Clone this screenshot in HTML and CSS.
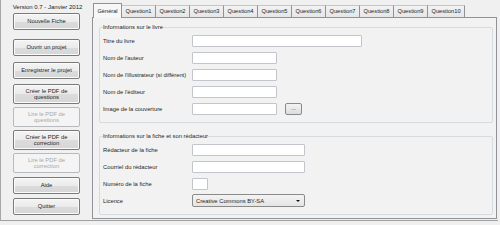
FILE: index.html
```html
<!DOCTYPE html>
<html lang="fr">
<head>
<meta charset="utf-8">
<title>Fiche</title>
<link rel="stylesheet" href="styles.css">
</head>
<body>
<div class="app">
  <div class="sidebar">
    <div class="version">Version 0.7 - Janvier 2012</div>
    <button class="btn b1">Nouvelle Fiche</button>
    <button class="btn b2">Ouvrir un projet</button>
    <button class="btn b3">Enregistrer le projet</button>
    <button class="btn tall b4">Créer le PDF de<br>questions</button>
    <button class="btn tall off b5" disabled>Lire le PDF de<br>questions</button>
    <button class="btn tall b6">Créer le PDF de<br>correction</button>
    <button class="btn tall off b7" disabled>Lire le PDF de<br>correction</button>
    <button class="btn b8">Aide</button>
    <button class="btn b9">Quitter</button>
  </div>
  <div class="tabs">
    <div class="strip">
      <div class="tab sel">Général</div>
      <div class="tab">Question1</div>
      <div class="tab">Question2</div>
      <div class="tab">Question3</div>
      <div class="tab">Question4</div>
      <div class="tab">Question5</div>
      <div class="tab">Question6</div>
      <div class="tab">Question7</div>
      <div class="tab">Question8</div>
      <div class="tab">Question9</div>
      <div class="tab wide">Question10</div>
    </div>
    <div class="panel">
      <fieldset class="group g1">
        <legend>Informations sur le livre</legend>
        <div class="row"><span class="lbl">Titre du livre</span><span class="inp long"></span></div>
        <div class="row"><span class="lbl">Nom de l'auteur</span><span class="inp mid"></span></div>
        <div class="row"><span class="lbl">Nom de l'illustrateur (si différent)</span><span class="inp mid"></span></div>
        <div class="row"><span class="lbl">Nom de l'éditeur</span><span class="inp mid"></span></div>
        <div class="row"><span class="lbl">Image de la couverture</span><span class="inp mid"></span><span class="dots">...</span></div>
      </fieldset>
      <fieldset class="group g2">
        <legend>Informations sur la fiche et son rédacteur</legend>
        <div class="row"><span class="lbl">Rédacteur de la fiche</span><span class="inp wide2"></span></div>
        <div class="row"><span class="lbl">Courriel du rédacteur</span><span class="inp wide2"></span></div>
        <div class="row"><span class="lbl">Numéro de la fiche</span><span class="inp tiny"></span></div>
        <div class="row"><span class="lbl">Licence</span><span class="select">Creative Commons BY-SA<span class="arrow"></span></span></div>
      </fieldset>
    </div>
  </div>
</div>
</body>
</html>
```

FILE: styles.css
```css
* { box-sizing: border-box; }
html, body { margin: 0; padding: 0; }
body {
  width: 500px;
  height: 225px;
  background: #f0f0f0;
  font-family: "Liberation Sans", Arial, sans-serif;
  font-size: 5.8px;
  color: #1e1e1e;
  overflow: hidden;
}
.app {
  display: flex;
  height: 221px;
  width: 498px;
  border-left: 1px solid #a8a8a8;
  border-bottom: 1px solid #a0a0a0;
}
.sidebar {
  width: 91px;
  display: flex;
  flex-direction: column;
  align-items: center;
  padding-top: 4px;
}
.version {
  font-size: 6px;
  line-height: 7px;
  margin-left: 2px;
  color: #222;
}
.btn {
  width: 67px;
  height: 17px;
  margin: 0;
  padding: 0;
  font-family: inherit;
  font-size: 5.8px;
  line-height: 6.5px;
  color: #1e1e1e;
  border: 1px solid #7a7a7a;
  border-radius: 2px;
  background: linear-gradient(#f4f4f4, #ebebeb 50%, #dcdcdc 51%, #d6d6d6);
  box-shadow: inset 0 0 0 1px #fbfbfb;
}
.btn.tall { height: 20px; }
.btn.off {
  color: #a8a8a8;
  border-color: #b8bbbe;
  background: #f4f4f4;
  box-shadow: none;
}
.b1 { margin-top: 2px; }
.b2 { margin-top: 9px; }
.b3 { margin-top: 6px; }
.b4 { margin-top: 5px; }
.b5 { margin-top: 3px; }
.b6 { margin-top: 3px; }
.b7 { margin-top: 3px; }
.b8 { margin-top: 4px; }
.b9 { margin-top: 4px; }

.tabs {
  flex: 1;
  display: flex;
  flex-direction: column;
  padding-right: 1px;
  padding-bottom: 1px;
}
.strip {
  display: flex;
  align-items: flex-end;
  height: 17px;
  padding-left: 1px;
}
.tab {
  width: 34px;
  height: 12px;
  line-height: 11px;
  text-align: center;
  font-size: 5.7px;
  border-top: 1px solid #c4c6cb;
  border-right: 1px solid #8f9297;
  background: linear-gradient(#f2f2f2, #e6e6e6);
  color: #1e1e1e;
}
.tab.wide { width: 37px; }
.tab.sel {
  width: 29px;
  height: 15px;
  line-height: 14px;
  background: #f7f7f7;
  border-left: 1px solid #8f9297;
  border-top: 1px solid #8f9297;
  margin-bottom: -1px;
  position: relative;
  z-index: 1;
}
.panel {
  flex: 1;
  border: 1px solid #8f9297;
  background: #f2f2f2;
  padding: 6px 3px 3px 6px;
  display: flex;
  flex-direction: column;
}
.group {
  margin: 0;
  border: 1px solid #d6dbe0;
  border-radius: 2px;
  padding: 1px 0 0 3px;
  min-width: 0;
}
.group legend {
  padding: 0;
  margin-left: 0;
  line-height: 6px;
  font-size: 5.8px;
  color: #1e1e1e;
}
.g1 { height: 99px; padding-top: 2px; }
.g2 { height: 82px; margin-top: 10px; padding-top: 2px; }
.row {
  display: flex;
  align-items: center;
  height: 17px;
}
.lbl {
  width: 89px;
  flex: none;
  white-space: nowrap;
}
.inp {
  height: 12px;
  background: #fff;
  border: 1px solid #c2c5cb;
  border-radius: 1px;
}
.long { width: 170px; }
.mid { width: 85px; }
.wide2 { width: 113px; }
.tiny { width: 16px; }
.dots {
  margin-left: 8px;
  width: 17px;
  height: 12px;
  border: 1px solid #8a8a8a;
  border-radius: 2px;
  background: linear-gradient(#f4f4f4, #dcdcdc);
  text-align: center;
  line-height: 8px;
  font-size: 5.8px;
}
.select {
  width: 113px;
  height: 13px;
  border: 1px solid #8a8a8a;
  border-radius: 2px;
  background: linear-gradient(#f4f4f4, #e4e4e4);
  display: flex;
  align-items: center;
  padding-left: 3px;
  justify-content: space-between;
  padding-right: 4px;
}
.arrow {
  width: 0;
  height: 0;
  border-left: 2px solid transparent;
  border-right: 2px solid transparent;
  border-top: 2.5px solid #111;
}
```
